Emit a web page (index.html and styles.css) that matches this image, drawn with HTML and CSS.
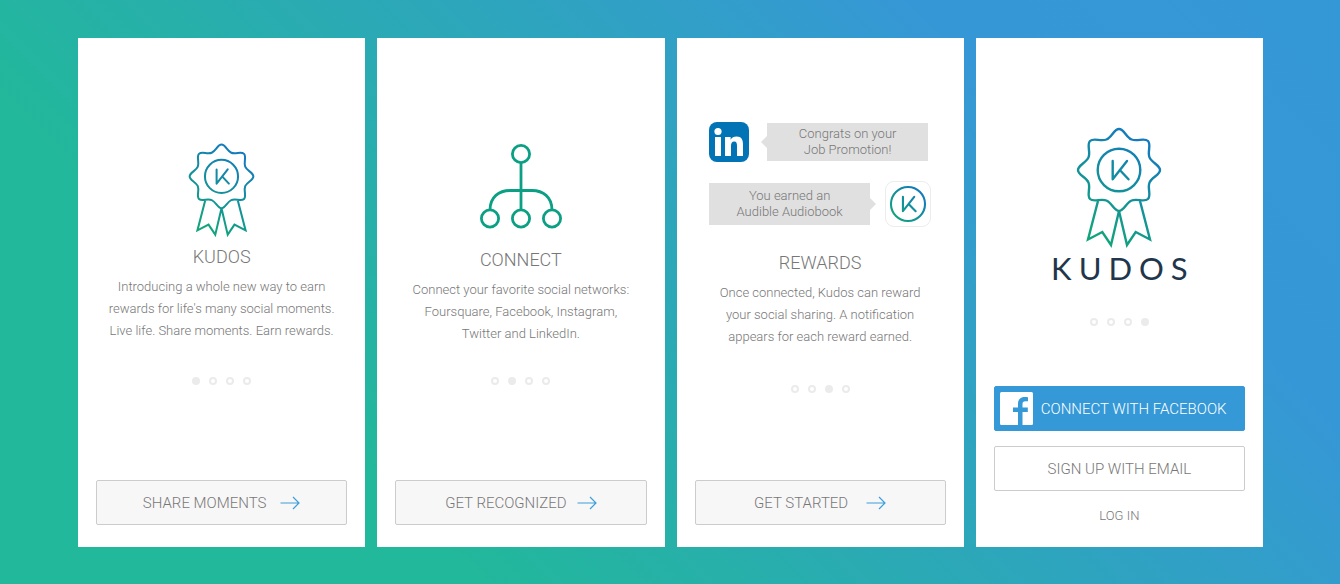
FILE: index.html
```
<!DOCTYPE html>
<html lang="en">
<head>
<meta charset="utf-8">
<meta name="viewport" content="width=device-width, initial-scale=1">
<title>Kudos</title>
<link rel="stylesheet" href="styles.css">
</head>
<body>
<svg class="defs" width="0" height="0" aria-hidden="true">
  <defs>
    <linearGradient id="ink" gradientUnits="userSpaceOnUse" x1="-30" y1="60" x2="30" y2="-30">
      <stop offset="0" stop-color="#12a47c"/>
      <stop offset="1" stop-color="#1479c0"/>
    </linearGradient>
    <linearGradient id="ring" gradientUnits="userSpaceOnUse" x1="-15" y1="15" x2="15" y2="-15">
      <stop offset="0" stop-color="#12a47c"/>
      <stop offset="1" stop-color="#1479c0"/>
    </linearGradient>
    <symbol id="badge" viewBox="-43 -43 86 121">
      <g fill="none" stroke="url(#ink)">
        <path d="M0,-41C5,-41 7.1,-32.8 12.6,-30.5C18.1,-28.2 25.5,-32.5 29,-29C32.5,-25.5 28.2,-18.1 30.5,-12.6C32.8,-7.1 41,-5 41,0C41,5 32.8,7.1 30.5,12.6C28.2,18.1 32.5,25.5 29,29C25.5,32.5 18.1,28.2 12.6,30.5C7.1,32.8 5,41 0,41C-5,41 -7.1,32.8 -12.6,30.5C-18.1,28.2 -25.5,32.5 -29,29C-32.5,25.5 -28.2,18.1 -30.5,12.6C-32.8,7.1 -41,5 -41,0C-41,-5 -32.8,-7.1 -30.5,-12.6C-28.2,-18.1 -32.5,-25.5 -29,-29C-25.5,-32.5 -18.1,-28.2 -12.6,-30.5C-7.1,-32.8 -5,-41 0,-41Z"/>
        <circle r="21.3"/>
        <path stroke-linecap="round" stroke-linejoin="round" d="M-6.3,-9V9.3L8,-9M.8,0L9.5,9.3"/>
        <path d="M-21,31L-31,69.5L-16.7,62L-8,75L0,41L8,75L16.7,62L31,69.5L21,31"/>
      </g>
    </symbol>
    <symbol id="arrow" viewBox="0 0 20 14">
      <path fill="none" stroke="#3d9fdb" stroke-width="1.2" d="M0.5 7H19M13 1l6 6-6 6"/>
    </symbol>
  </defs>
</svg>
<main class="screens">
  <section class="panel panel-intro">
    <svg class="badge" role="img" aria-label="Kudos badge"><use href="#badge"/></svg>
    <h2 class="title">KUDOS</h2>
    <p class="copy">Introducing a whole new way to earn<br>rewards for life's many social moments.<br>Live life. Share moments. Earn rewards.</p>
    <div class="dots"><i class="dot on"></i><i class="dot"></i><i class="dot"></i><i class="dot"></i></div>
    <div class="actions"><button class="btn" type="button">SHARE MOMENTS<svg class="arrow" aria-hidden="true"><use href="#arrow"/></svg></button></div>
  </section>

  <section class="panel panel-connect">
    <svg class="network" viewBox="0 0 82 86" role="img" aria-label="Network">
      <g fill="none" stroke="#0ba084" stroke-width="2.8">
        <circle cx="41" cy="10" r="8.6"/><circle cx="10" cy="74.500" r="8.600"/><circle cx="41" cy="74.500" r="8.600"/><circle cx="72" cy="74.500" r="8.600"/>
        <path d="M41 18.500V66M10 66C10 53 19 46.500 30 46.500H52C63 46.500 72 53 72 66"/>
      </g>
    </svg>
    <h2 class="title">CONNECT</h2>
    <p class="copy">Connect your favorite social networks:<br>Foursquare, Facebook, Instagram,<br>Twitter and LinkedIn.</p>
    <div class="dots"><i class="dot"></i><i class="dot on"></i><i class="dot"></i><i class="dot"></i></div>
    <div class="actions"><button class="btn btn-tight" type="button">GET RECOGNIZED<svg class="arrow" aria-hidden="true"><use href="#arrow"/></svg></button></div>
  </section>

  <section class="panel panel-rewards">
    <div class="chat">
      <div class="message">
        <svg class="linkedin" viewBox="0 0 40 40" role="img" aria-label="LinkedIn">
          <rect width="40" height="40" rx="8" fill="#0274b6"/>
          <circle cx="9" cy="9.500" r="3.600" fill="#fff"/>
          <path fill="#fff" d="M6 15h6v19H6zM16 15h5.600v2.700c1.200-2 3.300-3.200 6-3.200 5 0 6.400 3.300 6.400 8V34h-6v-10c0-2.600-.4-4.500-2.800-4.500s-3.200 1.900-3.200 4.500v10h-6z"/>
        </svg>
        <p class="bubble bubble-left">Congrats on your<br>Job Promotion!</p>
      </div>
      <div class="message">
        <p class="bubble bubble-right">You earned an<br>Audible Audiobook</p>
        <svg class="app" viewBox="-23 -23 46 46" role="img" aria-label="Kudos">
          <g fill="none" stroke="url(#ring)" stroke-width="2.200">
            <circle r="17.800"/>
            <path stroke-linecap="round" stroke-linejoin="round" d="M-5.300,-7.500V7.500L6.500,-7.500M.6,0L8,7.500"/>
          </g>
        </svg>
      </div>
    </div>
    <h2 class="title">REWARDS</h2>
    <p class="copy">Once connected, Kudos can reward<br>your social sharing. A notification<br>appears for each reward earned.</p>
    <div class="dots"><i class="dot"></i><i class="dot"></i><i class="dot on"></i><i class="dot"></i></div>
    <div class="actions"><button class="btn btn-wide" type="button">GET STARTED<svg class="arrow" aria-hidden="true"><use href="#arrow"/></svg></button></div>
  </section>

  <section class="panel panel-login">
    <svg class="badge badge-large" role="img" aria-label="Kudos badge"><use href="#badge"/></svg>
    <h1 class="wordmark">KUDOS</h1>
    <div class="dots"><i class="dot"></i><i class="dot"></i><i class="dot"></i><i class="dot on"></i></div>
    <div class="actions">
      <button class="btn btn-facebook" type="button">
        <svg class="facebook" viewBox="0 0 33 33" aria-hidden="true">
          <rect width="33" height="33" rx="1.500" fill="#fff"/>
          <path fill="#3598d7" d="M18 33V20h-5v-4.500h5V12c0-4.600 2.700-7 6.700-7 1.500 0 2.700.1 3.300.2v4h-2.500c-2.200 0-3 1-3 2.800v3.500h5.300V20h-5.300v13z"/>
        </svg>
        CONNECT WITH FACEBOOK</button>
      <button class="btn btn-email" type="button">SIGN UP WITH EMAIL</button>
      <a class="login" href="#login">LOG IN</a>
    </div>
  </section>
</main>
</body>
</html>
```
FILE: styles.css
```
* {
  box-sizing: border-box;
}

body {
  margin: 0;
  min-height: 100vh;
  display: flex;
  font-family: Roboto, "Liberation Sans", sans-serif;
  font-weight: 300;
  color: #777;
  background: linear-gradient(45deg, #22b89b 0%, #22b89b 25%, #3697d6 78%, #3598d6 100%);
}

h1, h2, p {
  margin: 0;
}

.defs {
  position: absolute;
}

.screens {
  flex: 1;
  display: grid;
  grid-template-columns: repeat(4, minmax(0, 1fr));
  gap: 12px;
  padding: 38px 77px 37px 78px;
}

.panel {
  display: flex;
  flex-direction: column;
  align-items: center;
  padding: 105px 18px 22px;
  background: #fff;
  text-align: center;
}

.panel-connect {
  padding-top: 106px;
}

.panel-rewards {
  padding-top: 84px;
}

.panel-login {
  padding-top: 89px;
}

.badge {
  width: 67px;
  height: 94px;
  stroke-width: 2.6px;
}

.badge-large {
  width: 86px;
  height: 121px;
  stroke-width: 2.4px;
}

.network {
  width: 82px;
  height: 86px;
}

.title {
  margin-top: 8px;
  font-size: 18px;
  line-height: 24px;
  font-weight: 300;
}

.panel-connect .title {
  margin-top: 18px;
}

.panel-rewards .title {
  margin-top: 24px;
}

.copy {
  margin-top: 7px;
  font-size: 13px;
  line-height: 22px;
  white-space: nowrap;
}

.dots {
  display: flex;
  gap: 9px;
  margin-top: 35px;
}

.panel-connect .dots {
  margin-top: 32px;
}

.panel-rewards .dots {
  margin-top: 37px;
}

.panel-login .dots {
  margin-top: 32px;
}

.dot {
  width: 8px;
  height: 8px;
  border: 2px solid #ebebeb;
  border-radius: 50%;
}

.on {
  background: #ebebeb;
}

.actions {
  display: flex;
  flex-direction: column;
  align-items: stretch;
  gap: 15px;
  width: 100%;
  margin-top: auto;
}

.btn {
  display: flex;
  align-items: center;
  justify-content: center;
  gap: 14px;
  height: 45px;
  padding: 0;
  border: 1px solid #ccc;
  border-radius: 2px;
  background: #f7f7f7;
  font: inherit;
  font-size: 15px;
  color: inherit;
  white-space: nowrap;
  cursor: pointer;
}

.btn-tight {
  gap: 10px;
}

.btn-wide {
  gap: 18px;
}

.btn-email {
  background: #fff;
}

.btn-facebook {
  justify-content: flex-start;
  gap: 8px;
  padding-left: 5px;
  border-color: #3598d7;
  background: #3598d7;
  color: #fff;
}

.facebook {
  flex: none;
  width: 33px;
  height: 33px;
}

.arrow {
  width: 20px;
  height: 14px;
}

.login {
  font-size: 13px;
  line-height: 19px;
  color: inherit;
  text-decoration: none;
}

.chat {
  display: flex;
  flex-direction: column;
  gap: 19px;
  width: 222px;
}

.message {
  display: flex;
  align-items: center;
  justify-content: space-between;
}

.linkedin {
  width: 40px;
  height: 40px;
}

.bubble {
  position: relative;
  width: 161px;
  padding: 3px 0;
  background: #e0e0e0;
  font-size: 13px;
  line-height: 16px;
}

.bubble-left {
  margin-right: 3px;
}

.bubble-right {
  padding: 5px 0;
}

.bubble::before {
  content: "";
  position: absolute;
  top: 50%;
  margin-top: -6px;
  border: 6px solid transparent;
}

.bubble-left::before {
  right: 100%;
  border-right-color: #e0e0e0;
  border-left: 0;
}

.bubble-right::before {
  left: 100%;
  border-left-color: #e0e0e0;
  border-right: 0;
}

.app {
  width: 46px;
  height: 46px;
  border: 1px solid #ececec;
  border-radius: 9px;
}

.wordmark {
  margin-top: 2px;
  padding-left: 7px;
  font-family: Lato, "Liberation Sans", sans-serif;
  font-size: 31px;
  line-height: 36px;
  font-weight: 400;
  letter-spacing: 7px;
  color: #22364b;
}
```
